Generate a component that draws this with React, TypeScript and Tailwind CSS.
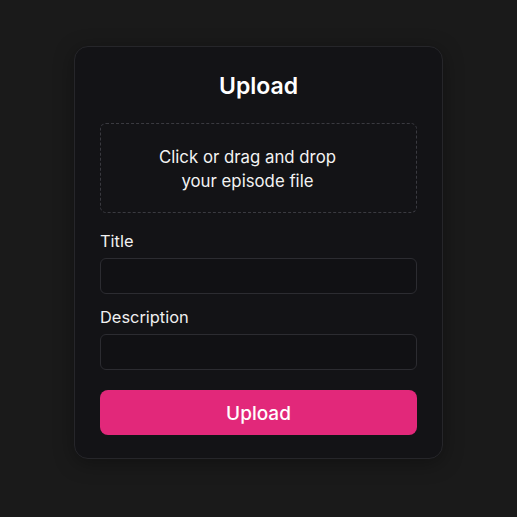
import React from 'react'

export default function App() {
  return (
    <div
      className="flex h-[517px] w-[517px] items-start justify-center bg-[#1a1a1a] pt-[46px]"
      style={{ fontFamily: 'Inter, "Noto Sans", sans-serif' }}
    >
      <div className="w-[369px] rounded-[14px] border border-[#26262a] bg-[#131316] px-[25px] pb-[23px] pt-[25px] shadow-[0_4px_20px_rgba(0,0,0,0.35)]">
        <h1 className="text-center text-[23px] font-semibold leading-[28px] text-white">Upload</h1>

        <div className="mt-[23px] flex h-[90px] cursor-pointer flex-col items-center justify-center rounded-[6px] border border-dashed border-[#3a3a40] pr-[22px] pt-[2px] text-center text-[16.8px] leading-[24px] text-[#f2f2f2]">
          <span>Click or drag and drop</span>
          <span>your episode file</span>
        </div>

        <label className="mt-[16px] block text-[16.4px] leading-[24px] text-[#f0f0f0]">Title</label>
        <input
          type="text"
          className="mt-[5px] block h-[36px] w-full rounded-[6px] border border-[#2c2c31] bg-[#111114] px-3 text-white outline-none"
        />

        <label className="mt-[11px] block text-[16.4px] leading-[24px] text-[#f0f0f0]">Description</label>
        <input
          type="text"
          className="mt-[5px] block h-[36px] w-full rounded-[6px] border border-[#2c2c31] bg-[#111114] px-3 text-white outline-none"
        />

        <button className="mt-[20px] flex h-[45px] w-full items-center justify-center rounded-[8px] bg-[#e2287a] pt-[3px] text-[19px] font-medium text-white">
          Upload
        </button>
      </div>
    </div>
  )
}
